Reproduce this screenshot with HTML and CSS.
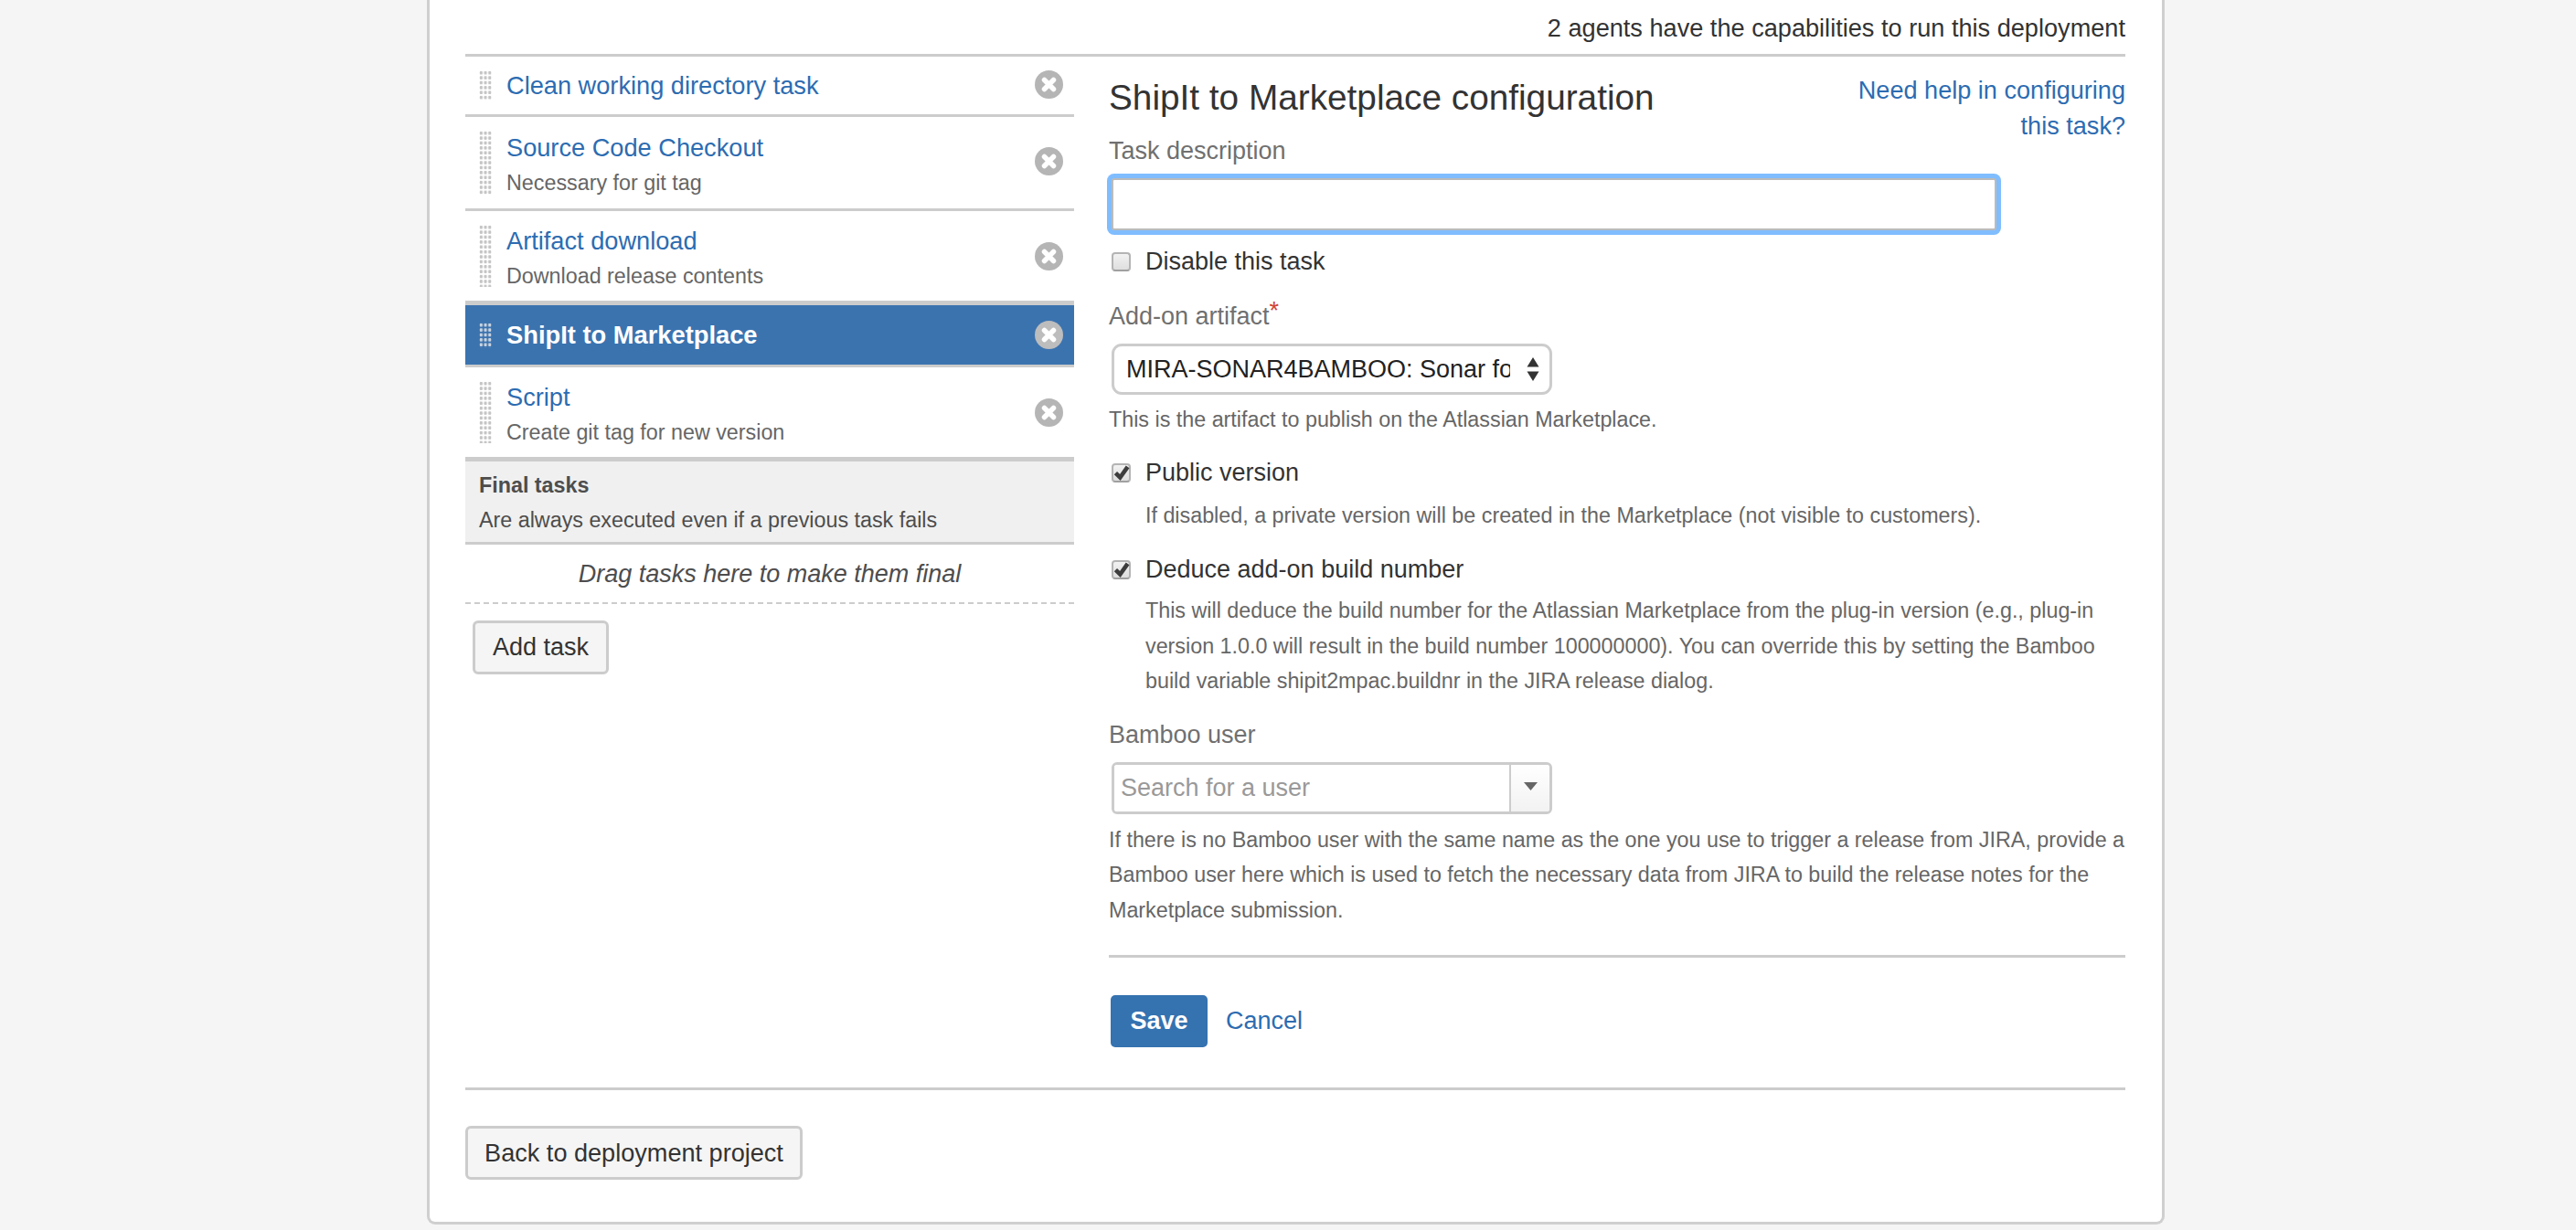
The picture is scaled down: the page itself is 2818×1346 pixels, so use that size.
FILE: index.html
```html
<!DOCTYPE html>
<html lang="en">
<head>
<meta charset="utf-8">
<title>ShipIt to Marketplace configuration</title>
<link rel="stylesheet" href="styles.css">
</head>
<body>
<main class="panel">
  <p class="agents">2 agents have the capabilities to run this deployment</p>
  <div class="columns">
    <section class="tasks">
      <div class="task task-one">
        <span class="grip"></span>
        <div class="task-body"><a class="task-title">Clean working directory task</a></div>
        <svg class="remove" viewBox="0 0 31 31"><circle cx="15.5" cy="15.5" r="15.5" fill="#b5b5b5"/><path d="M10.5 10.5l10 10M20.5 10.5l-10 10" stroke="#fff" stroke-width="5.500" stroke-linecap="round"/></svg>
      </div>
      <div class="task task-two">
        <span class="grip"></span>
        <div class="task-body"><a class="task-title">Source Code Checkout</a><p class="task-desc">Necessary for git tag</p></div>
        <svg class="remove" viewBox="0 0 31 31"><circle cx="15.5" cy="15.5" r="15.5" fill="#b5b5b5"/><path d="M10.5 10.5l10 10M20.5 10.5l-10 10" stroke="#fff" stroke-width="5.500" stroke-linecap="round"/></svg>
      </div>
      <div class="task task-three">
        <span class="grip"></span>
        <div class="task-body"><a class="task-title">Artifact download</a><p class="task-desc">Download release contents</p></div>
        <svg class="remove" viewBox="0 0 31 31"><circle cx="15.5" cy="15.5" r="15.5" fill="#b5b5b5"/><path d="M10.5 10.5l10 10M20.5 10.5l-10 10" stroke="#fff" stroke-width="5.500" stroke-linecap="round"/></svg>
      </div>
      <div class="task task-active">
        <span class="grip"></span>
        <div class="task-body"><a class="task-title">ShipIt to Marketplace</a></div>
        <svg class="remove" viewBox="0 0 31 31"><circle cx="15.5" cy="15.5" r="15.5" fill="#bdbdbd"/><path d="M10.5 10.5l10 10M20.5 10.5l-10 10" stroke="#fff" stroke-width="5.500" stroke-linecap="round"/></svg>
      </div>
      <div class="task task-five">
        <span class="grip"></span>
        <div class="task-body"><a class="task-title">Script</a><p class="task-desc">Create git tag for new version</p></div>
        <svg class="remove" viewBox="0 0 31 31"><circle cx="15.5" cy="15.5" r="15.5" fill="#b5b5b5"/><path d="M10.5 10.5l10 10M20.5 10.5l-10 10" stroke="#fff" stroke-width="5.500" stroke-linecap="round"/></svg>
      </div>
      <div class="final-head">
        <h3 class="final-title">Final tasks</h3>
        <p class="final-desc">Are always executed even if a previous task fails</p>
      </div>
      <div class="drop-zone">Drag tasks here to make them final</div>
      <button class="btn btn-add" type="button">Add task</button>
    </section>

    <form class="config">
      <div class="config-head">
        <h2 class="config-title">ShipIt to Marketplace configuration</h2>
        <a class="help-link">Need help in configuring this task?</a>
      </div>
      <label class="field-label label-desc">Task description</label>
      <input class="text-input" type="text">
      <div class="check-row check-disable">
        <span class="check"></span>
        <span class="check-label">Disable this task</span>
      </div>
      <label class="field-label label-artifact">Add-on artifact<span class="req">*</span></label>
      <div class="select-box">
        <span class="select-text">MIRA-SONAR4BAMBOO: Sonar for Bamboo</span>
        <svg class="select-arrows" viewBox="0 0 14 26"><path d="M7 0l6.500 10.500h-13zM7 26l6.500-10.500h-13z" fill="#333"/></svg>
      </div>
      <p class="hint hint-artifact">This is the artifact to publish on the Atlassian Marketplace.</p>
      <div class="check-row check-public">
        <span class="check"><svg class="tick" viewBox="0 0 20 20"><path d="M4 10.500l4.500 4.500L16 4.500" fill="none" stroke="#3d3d3d" stroke-width="4.200"/></svg></span>
        <span class="check-label">Public version</span>
      </div>
      <p class="hint hint-indent hint-public">If disabled, a private version will be created in the Marketplace (not visible to customers).</p>
      <div class="check-row check-deduce">
        <span class="check"><svg class="tick" viewBox="0 0 20 20"><path d="M4 10.500l4.500 4.500L16 4.500" fill="none" stroke="#3d3d3d" stroke-width="4.200"/></svg></span>
        <span class="check-label">Deduce add-on build number</span>
      </div>
      <p class="hint hint-indent hint-deduce">This will deduce the build number for the Atlassian Marketplace from the plug-in version (e.g., plug-in version 1.0.0 will result in the build number 100000000). You can override this by setting the Bamboo build variable shipit2mpac.buildnr in the JIRA release dialog.</p>
      <label class="field-label label-user">Bamboo user</label>
      <div class="user-box">
        <input class="user-input" type="text" placeholder="Search for a user">
        <span class="user-drop"><svg class="user-arrow" viewBox="0 0 15 9"><path d="M0 0h15L7.500 9z" fill="#666"/></svg></span>
      </div>
      <p class="hint hint-user">If there is no Bamboo user with the same name as the one you use to trigger a release from JIRA, provide a Bamboo user here which is used to fetch the necessary data from JIRA to build the release notes for the Marketplace submission.</p>
      <div class="actions">
        <button class="btn-save" type="button">Save</button>
        <a class="cancel">Cancel</a>
      </div>
    </form>
  </div>
  <div class="footer">
    <button class="btn btn-back" type="button">Back to deployment project</button>
  </div>
</main>
</body>
</html>
```
FILE: styles.css
```css
* { box-sizing: border-box; }
html, body { margin: 0; height: 1346px; overflow: hidden; }
body {
  background: #f5f5f5;
  font-family: "Liberation Sans", Arial, sans-serif;
  font-size: 27px;
  line-height: 39px;
  color: #333;
}
p, h2, h3 { margin: 0; font-weight: normal; }
a { color: #2d6cb1; }

.panel {
  width: 1901px;
  height: 1340px;
  margin-left: 467px;
  padding: 0 40px 0 39px;
  background: #fff;
  border: solid #cfcfcf;
  border-width: 0 3px 3px;
  border-radius: 0 0 9px 9px;
}
.agents {
  height: 59px;
  padding-top: 11px;
  font-size: 27.150px;
  text-align: right;
}
.columns {
  display: flex;
  gap: 38px;
  height: 1134px;
  border-top: 3px solid #ccc;
  border-bottom: 3px solid #ccc;
}

.tasks { width: 666px; flex: none; }
.task {
  display: flex;
  align-items: center;
  border-bottom: 3px solid #ccc;
}
.task-one { height: 66px; }
.task-two { height: 103px; }
.task-three { height: 101px; }
.task-active { height: 70px; background: #3b73af; border-top: 2px solid #ccc; }
.task-five { height: 103px; border-bottom-width: 5px; }
.task-two .task-body { padding-top: 5px; }
.task-three .task-body, .task-five .task-body { padding-top: 4px; }
.task-active .task-body { padding-bottom: 1px; }
.task-one .remove, .task-two .remove { margin-bottom: 3px; }
.grip {
  width: 14px;
  align-self: stretch;
  margin: 15px 16px 15px 15px;
  flex: none;
  background: radial-gradient(circle, #c4c4c4 1.6px, transparent 2px) 0 0 / 4.700px 5.400px;
}
.task-active .grip { margin: 19px 16px 18px 15px; background-image: radial-gradient(circle, #c9d3de 1.6px, transparent 2px); }
.task-body { flex: 1; }
.task-title { display: block; font-size: 27.200px; }
.task-desc { font-size: 23.300px; line-height: 38px; color: #666; }
.task-active .task-title { color: #fff; font-weight: bold; font-size: 27.300px; }
.remove { width: 31px; height: 31px; flex: none; margin-right: 12px; }

.final-head {
  height: 91px;
  padding: 7px 15px 0;
  background: #f0f0f0;
  border-bottom: 3px solid #ccc;
  font-size: 23.300px;
  line-height: 38px;
}
.final-title { font-size: 23.300px; font-weight: bold; color: #4d4d4d; }
.final-desc { color: #4d4d4d; }
.drop-zone {
  height: 65px;
  padding-top: 13px;
  text-align: center;
  font-style: italic;
  color: #4d4d4d;
  border-bottom: 2px dashed #ccc;
}
.btn {
  display: block;
  height: 59px;
  padding: 0;
  background: #f5f5f5;
  border: 3px solid #ccc;
  border-radius: 6px;
  font: inherit;
  color: #333;
}
.btn-add { width: 149px; margin: 18px 0 0 8px; }

.config { flex: 1; min-width: 0; }
.config-head { display: flex; justify-content: space-between; align-items: flex-start; height: 84px; }
.config-title { font-size: 38.750px; line-height: 50px; padding-top: 20px; white-space: nowrap; height: 70px; color: #333; }
.help-link { width: 300px; text-align: right; padding-top: 17px; font-size: 27.100px; }
.field-label { display: block; color: #707070; }
.label-desc { margin-top: 0; }
.text-input {
  display: block;
  width: 968px;
  height: 57px;
  margin: 10px 0 0 3px;
  background: #fff;
  border: 2px solid #bbb;
  border-radius: 3px;
  box-shadow: 0 0 0 5px #80bdff;
  outline: 0;
}
.check-row { display: flex; align-items: center; height: 39px; margin-left: 3px; }
.check {
  width: 21px;
  height: 21px;
  flex: none;
  margin-right: 16px;
  border: 2px solid #b4b4b4;
  border-bottom-color: #a0a0a0;
  border-radius: 4px;
  background: linear-gradient(#f2f2f2, #dedede);
  position: relative;
}
.tick { position: absolute; left: -2px; top: -3px; width: 22px; height: 22px; }
.check-disable { margin-top: 15px; }
.label-artifact { margin-top: 21px; }
.req { color: #d04437; position: relative; top: -6px; font-size: 27px; line-height: 0; }
.select-box {
  display: flex;
  align-items: center;
  width: 482px;
  height: 56px;
  margin: 10px 0 0 3px;
  padding: 0 14px 0 13px;
  border: 3px solid #ccc;
  border-radius: 11px;
  background: #fff;
}
.select-text { width: 420px; overflow: hidden; white-space: nowrap; flex: none; color: #222; }
.select-arrows { width: 14px; height: 26px; margin-left: 18px; flex: none; }
.hint { font-size: 23.300px; line-height: 38.500px; color: #666; }
.hint-indent { padding-left: 40px; }
.hint-artifact { margin-top: 8px; }
.check-public { margin-top: 19px; }
.hint-public { margin-top: 8px; }
.check-deduce { margin-top: 21px; }
.hint-deduce { margin-top: 6px; }
.label-user { margin-top: 20px; }
.user-box {
  display: flex;
  width: 482px;
  height: 57px;
  margin: 10px 0 0 3px;
  border: 3px solid #ccc;
  border-radius: 6px;
  overflow: hidden;
}
.user-input {
  flex: 1;
  min-width: 0;
  padding: 0 7px;
  border: 0;
  outline: 0;
  font: inherit;
}
.user-input::placeholder { color: #999; opacity: 1; }
.user-drop {
  display: flex;
  justify-content: center;
  width: 44px;
  padding-top: 19px;
  border-left: 2px solid #ccc;
  background: linear-gradient(#fff, #f2f2f2);
}
.user-arrow { width: 15px; height: 9px; }
.hint-user { margin-top: 9px; }
.actions {
  display: flex;
  align-items: center;
  gap: 20px;
  margin-top: 30px;
  padding-top: 41px;
  border-top: 3px solid #ccc;
}
.btn-save {
  width: 106px;
  height: 57px;
  margin-left: 2px;
  background: #3572b0;
  border: 0;
  border-radius: 5px;
  color: #fff;
  font: bold 27px "Liberation Sans", Arial, sans-serif;
}
.footer { padding-top: 39px; }
.btn-back { width: 369px; font-size: 27.100px; }
```
